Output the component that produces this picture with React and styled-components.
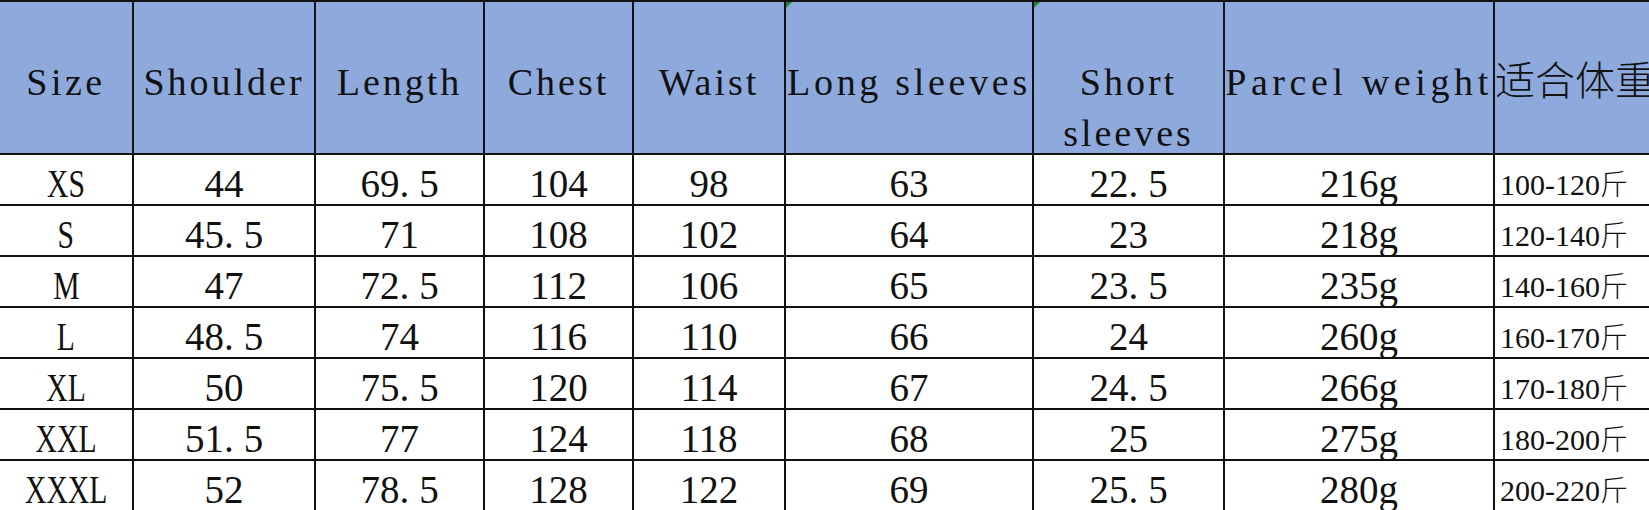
import React from 'react';
import styled, { createGlobalStyle, css } from 'styled-components';

const GlobalStyle = createGlobalStyle`
  html, body {
    margin: 0;
    padding: 0;
    background: #ffffff;
    overflow: hidden;
  }
`;

const columns = [
  { key: 'size', label: ['Size'], width: 134, spacing: 3.5 },
  { key: 'shoulder', label: ['Shoulder'], width: 182 },
  { key: 'length', label: ['Length'], width: 169 },
  { key: 'chest', label: ['Chest'], width: 149 },
  { key: 'waist', label: ['Waist'], width: 152 },
  { key: 'long', label: ['Long sleeves'], width: 248, marked: true, spacing: 3.7 },
  { key: 'short', label: ['Short', 'sleeves'], width: 191, marked: true },
  { key: 'parcel', label: ['Parcel weight'], width: 270, spacing: 4.6 },
  { key: 'fit', label: ['适合体重'], width: 220, cjk: true },
];

const rows = [
  ['XS', '44', '69.5', '104', '98', '63', '22.5', '216g', '100-120'],
  ['S', '45.5', '71', '108', '102', '64', '23', '218g', '120-140'],
  ['M', '47', '72.5', '112', '106', '65', '23.5', '235g', '140-160'],
  ['L', '48.5', '74', '116', '110', '66', '24', '260g', '160-170'],
  ['XL', '50', '75.5', '120', '114', '67', '24.5', '266g', '170-180'],
  ['XXL', '51.5', '77', '124', '118', '68', '25', '275g', '180-200'],
  ['XXXL', '52', '78.5', '128', '122', '69', '25.5', '280g', '200-220'],
];

const Sheet = styled.div`
  display: grid;
  grid-template-columns: ${columns.map((c) => `${c.width}px`).join(' ')};
  grid-template-rows: 153px repeat(${rows.length}, 51px);
  border-top: 2px solid #111;
  width: max-content;
  font-family: 'Liberation Serif', 'Noto Sans CJK SC', serif;
  color: #111;
`;

const HeadCell = styled.div`
  position: relative;
  background: #8eaadc;
  border-right: 2px solid #111;
  border-bottom: 2px solid #111;
  padding-top: 55px;
  display: flex;
  flex-direction: column;
  align-items: ${(p) => (p.$cjk ? 'flex-start' : 'center')};
  font-size: 38px;
  line-height: 51px;
  letter-spacing: ${(p) => (p.$cjk ? 0 : p.$spacing ?? 3)}px;
  white-space: nowrap;

  ${(p) =>
    p.$cjk &&
    css`
      font-family: 'Noto Sans CJK SC', sans-serif;
      font-weight: 300;
      font-size: 40px;
      padding-top: 51px;
      padding-left: 0;
    `}

  ${(p) =>
    p.$marked &&
    css`
      &::before {
        content: '';
        position: absolute;
        top: 0;
        left: 0;
        border-top: 6px solid #1f8a3a;
        border-right: 6px solid transparent;
      }
    `}
`;

const Cell = styled.div`
  border-right: 2px solid #111;
  border-bottom: 2px solid #111;
  padding-top: 8px;
  line-height: 41px;
  font-size: 39px;
  text-align: center;
  white-space: nowrap;
  overflow: hidden;
`;

const RangeCell = styled(Cell)`
  text-align: left;
  padding-left: 5px;
  font-size: 30px;
  border-right: none;
`;

const Dot = styled.span`
  letter-spacing: 10px;
`;

const Jin = styled.span`
  font-family: 'Noto Sans CJK SC', sans-serif;
  font-size: 28px;
  font-weight: 300;
`;

const SizeLabel = styled.span`
  display: inline-block;
  transform: scaleX(0.76);
`;

// SimSun-style half-width period: keep the digits, widen the gap after the dot
const Value = ({ text }) => {
  const parts = text.split('.');
  if (parts.length === 1) return text;
  return (
    <>
      {parts[0]}
      <Dot>.</Dot>
      {parts[1]}
    </>
  );
};

export default function App() {
  return (
    <>
      <GlobalStyle />
      <Sheet>
        {columns.map((c) => (
          <HeadCell key={c.key} $cjk={c.cjk} $marked={c.marked} $spacing={c.spacing}>
            {c.label.map((line) => (
              <span key={line}>{line}</span>
            ))}
          </HeadCell>
        ))}
        {rows.map((row) =>
          row.map((value, i) => {
            const key = `${row[0]}-${i}`;
            if (i === 0) {
              return (
                <Cell key={key}>
                  <SizeLabel>{value}</SizeLabel>
                </Cell>
              );
            }
            if (i === row.length - 1) {
              return (
                <RangeCell key={key}>
                  {value}
                  <Jin>斤</Jin>
                </RangeCell>
              );
            }
            return (
              <Cell key={key}>
                <Value text={value} />
              </Cell>
            );
          })
        )}
      </Sheet>
    </>
  );
}
